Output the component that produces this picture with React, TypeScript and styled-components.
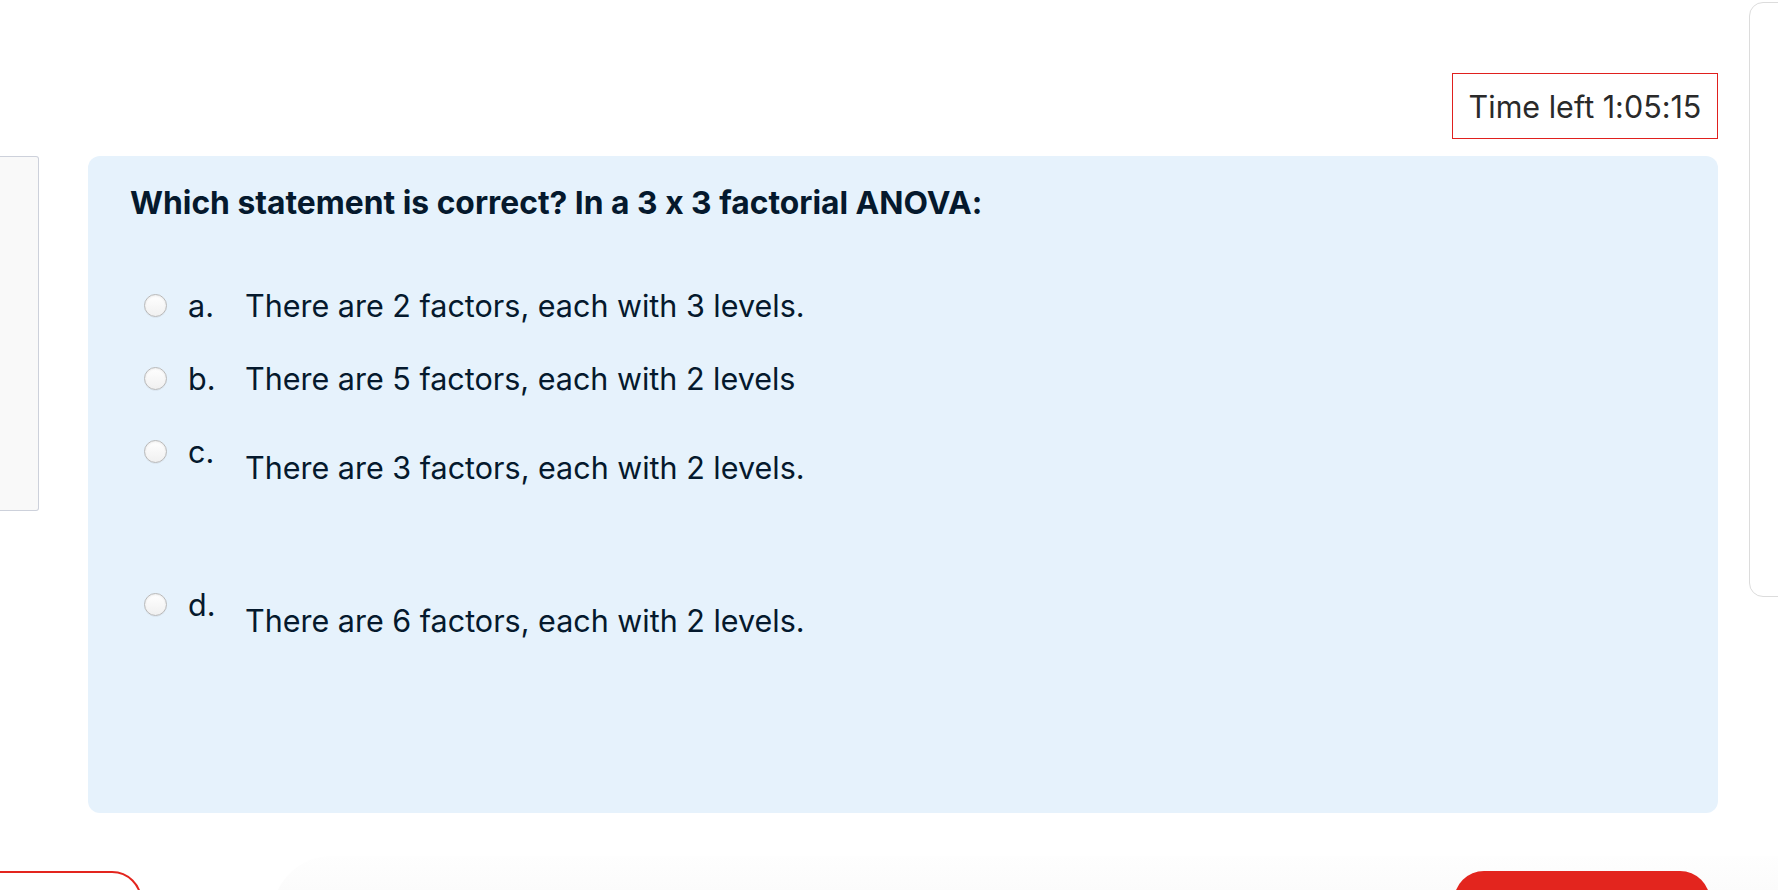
import React from "react";
import styled, { createGlobalStyle } from "styled-components";

const Global = createGlobalStyle`
  html, body {
    margin: 0;
    padding: 0;
    background: #ffffff;
    overflow: hidden;
  }
  body {
    font-family: Inter, "Liberation Sans", sans-serif;
    font-feature-settings: "calt" 0;
    color: #05192d;
  }
  * { box-sizing: border-box; }
`;

const Page = styled.div`
  width: 1778px;
  height: 890px;
  display: flex;
  flex-direction: column;
  overflow: hidden;
`;

const Top = styled.div`
  display: flex;
  align-items: flex-start;
`;

const LeftRail = styled.aside`
  width: 39px;
  height: 355px;
  margin-top: 156px;
  flex-shrink: 0;
  background: #f9f9f9;
  border: 1.5px solid #cdd1db;
  border-left: none;
  border-radius: 0 3px 3px 0;
`;

const Main = styled.main`
  width: 1630px;
  margin-left: 49px;
  flex-shrink: 0;
  display: flex;
  flex-direction: column;
`;

const TimerRow = styled.div`
  display: flex;
  justify-content: flex-end;
  padding-top: 73px;
  margin-bottom: 17px;
`;

const Timer = styled.div`
  height: 66px;
  width: 266px;
  border: 1.5px solid #e0201e;
  display: flex;
  align-items: center;
  justify-content: center;
  font-size: 30.5px;
  color: #2a2a2a;
`;

const RightRail = styled.aside`
  flex: 1;
  height: 595px;
  margin-top: 2px;
  margin-left: 31px;
  margin-right: -40px;
  border: 1.5px solid #dcdcdc;
  border-radius: 14px;
`;

const Card = styled.section`
  height: 657px;
  background: #e6f2fc;
  border-radius: 12px;
  padding: 29px 42px;
`;

const Question = styled.h2`
  margin: 0 0 67px;
  font-size: 31.8px;
  line-height: 36px;
  font-weight: 700;
  color: #05192d;
`;

const Options = styled.div`
  display: flex;
  flex-direction: column;
  gap: 37px;
  padding-left: 14px;
`;

const Option = styled.label<{ $trail?: number }>`
  display: flex;
  align-items: flex-start;
  font-size: 30.5px;
  line-height: 36px;
  color: #05192d;
  padding-bottom: ${(p) => p.$trail ?? 0}px;
`;

const Radio = styled.span`
  width: 23px;
  height: 23px;
  margin-top: 6px;
  border-radius: 50%;
  flex-shrink: 0;
  background: linear-gradient(#ffffff, #f0f0f0);
  border: 1px solid #b9b9b9;
  box-shadow: inset 0 1px 2px rgba(0, 0, 0, 0.08), 0 0.5px 0.5px rgba(0, 0, 0, 0.08);
`;

const Letter = styled.span`
  width: 57px;
  margin-left: 21px;
  flex-shrink: 0;
`;

const Text = styled.span<{ $offset?: number }>`
  margin-top: ${(p) => p.$offset ?? 0}px;
`;

const Footer = styled.footer`
  display: flex;
  align-items: flex-start;
  margin-top: 43px;
`;

const BackButton = styled.button`
  width: 242px;
  height: 60px;
  margin-left: -100px;
  margin-top: 15px;
  flex-shrink: 0;
  background: #ffffff;
  border: 2px solid #e3251e;
  border-radius: 36px;
`;

const Bar = styled.div`
  flex: 1;
  margin-left: 130px;
  padding-top: 15px;
  padding-right: 68px;
  display: flex;
  justify-content: flex-end;
  height: 80px;
  background: linear-gradient(#fefefe, #f7f7f7);
  border-top-left-radius: 60px;
`;

const NextButton = styled.button`
  width: 256px;
  height: 60px;
  background: #e3251e;
  border: none;
  border-radius: 36px;
`;

const options = [
  { letter: "a.", text: "There are 2 factors, each with 3 levels.", offset: 0, trail: 0 },
  { letter: "b.", text: "There are 5 factors, each with 2 levels", offset: 0, trail: 0 },
  { letter: "c.", text: "There are 3 factors, each with 2 levels.", offset: 16, trail: 64 },
  { letter: "d.", text: "There are 6 factors, each with 2 levels.", offset: 16, trail: 0 },
];

export default function App() {
  return (
    <Page>
      <Global />
      <Top>
        <LeftRail />
        <Main>
          <TimerRow>
            <Timer>Time left 1:05:15</Timer>
          </TimerRow>
          <Card>
            <Question>Which statement is correct? In a 3 x 3 factorial ANOVA:</Question>
            <Options>
              {options.map((o) => (
                <Option key={o.letter} $trail={o.trail}>
                  <Radio />
                  <Letter>{o.letter}</Letter>
                  <Text $offset={o.offset}>{o.text}</Text>
                </Option>
              ))}
            </Options>
          </Card>
        </Main>
        <RightRail />
      </Top>
      <Footer>
        <BackButton />
        <Bar>
          <NextButton />
        </Bar>
      </Footer>
    </Page>
  );
}
